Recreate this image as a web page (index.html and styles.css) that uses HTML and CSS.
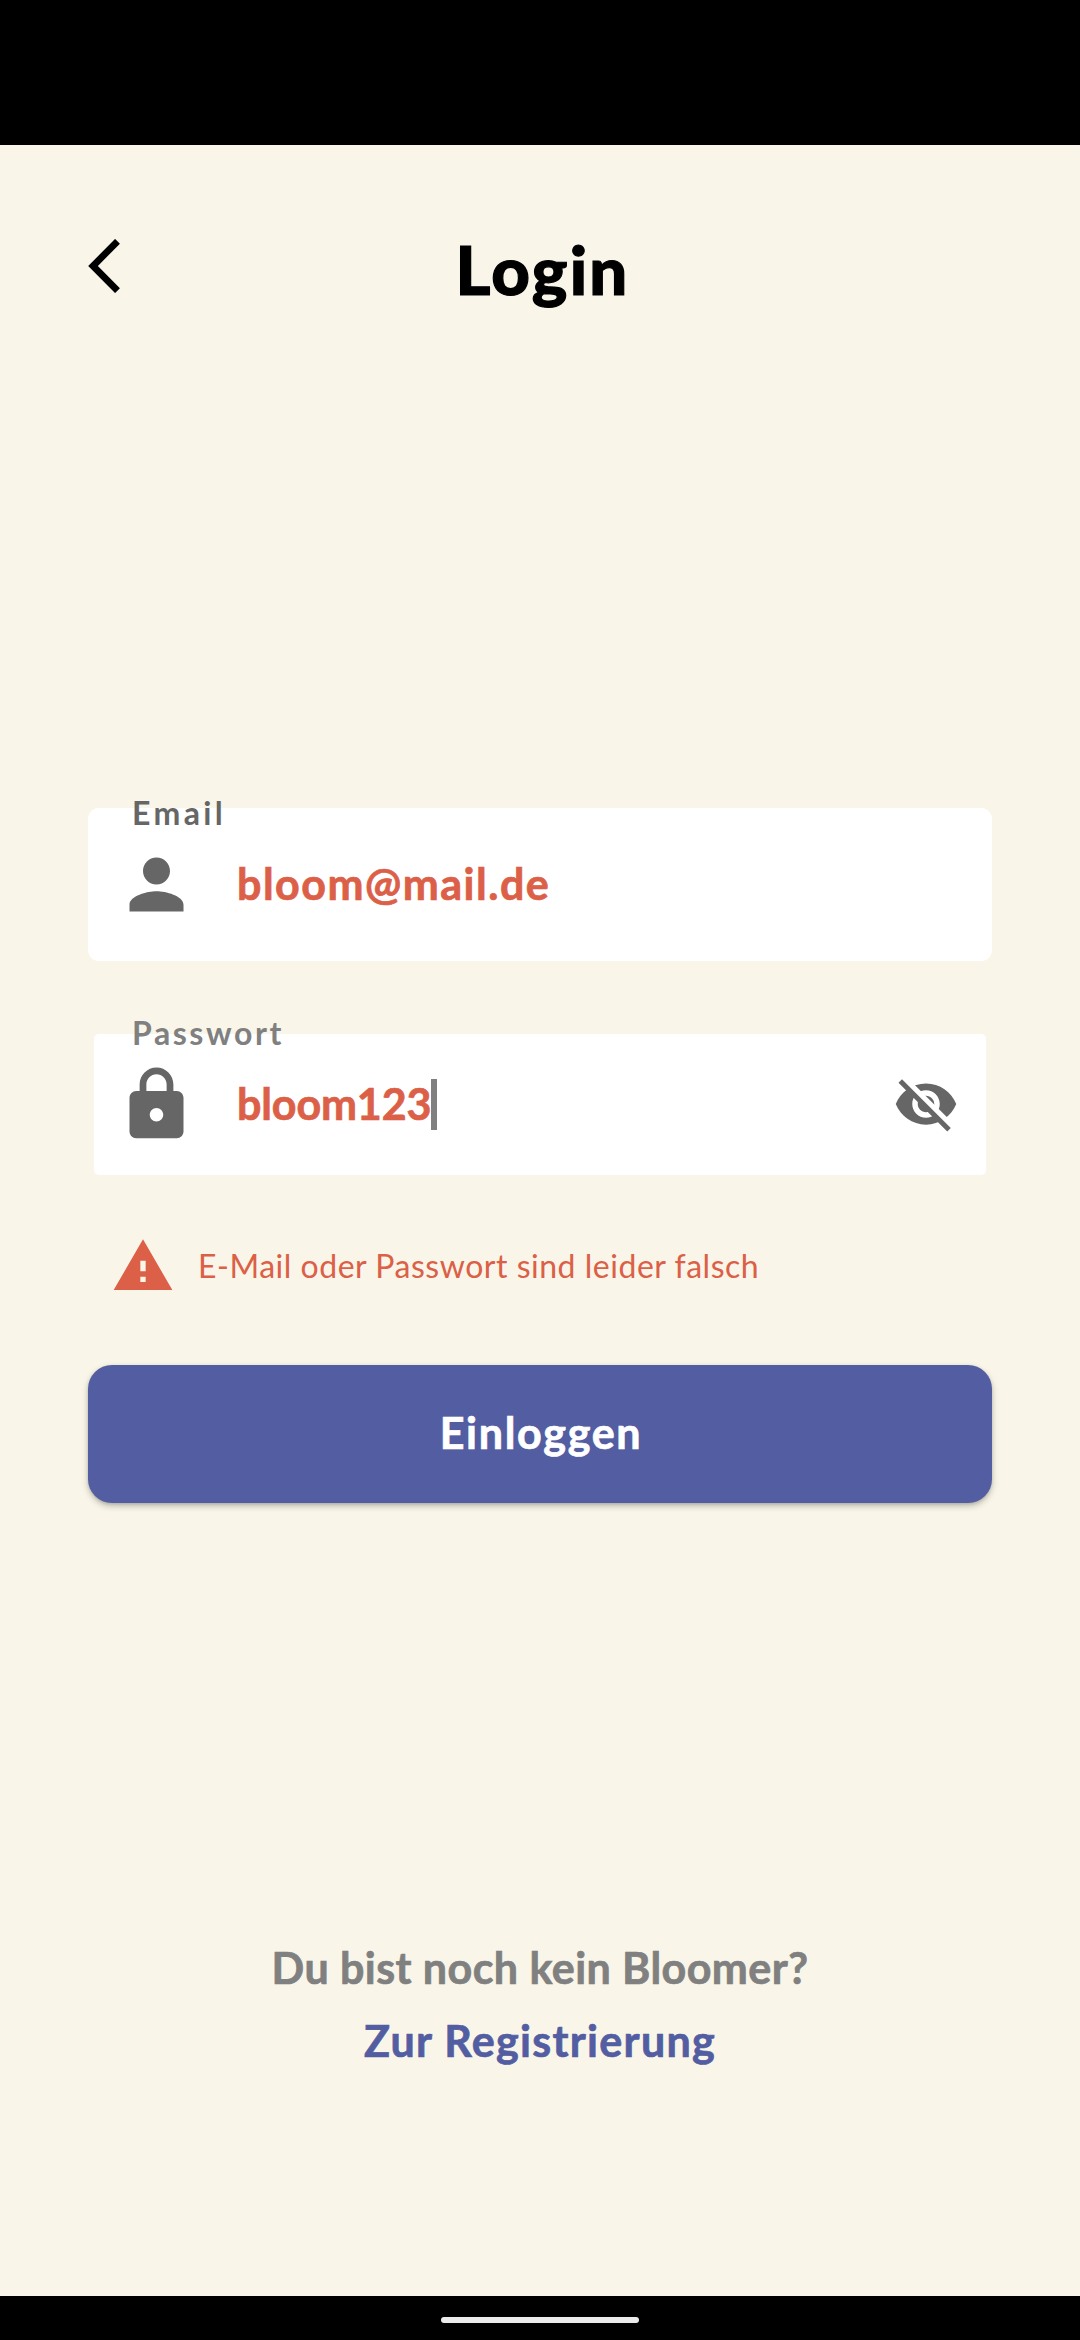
FILE: index.html
```
<!DOCTYPE html>
<html lang="de">
<head>
<meta charset="utf-8">
<title>Login</title>
<link rel="stylesheet" href="styles.css">
</head>
<body>
<div class="status-bar"></div>
<main class="screen">
  <header class="header">
    <svg class="back" viewBox="0 0 32 54"><path d="M29.5 2.3 5 27l24.5 24.7" fill="none" stroke="#000" stroke-width="6.8"/></svg>
    <h1 class="title">Login</h1>
  </header>

  <section class="form">
    <div class="field">
      <label class="label label-email">Email</label>
      <svg class="icon" viewBox="0 0 24 24"><path d="M12 12c2.21 0 4-1.79 4-4s-1.79-4-4-4-4 1.79-4 4 1.79 4 4 4zm0 2c-2.67 0-8 1.34-8 4v2h16v-2c0-2.66-5.33-4-8-4z"/></svg>
      <span class="value value-email">bloom@mail.de</span>
    </div>

    <div class="field field-focused">
      <label class="label label-password">Passwort</label>
      <svg class="icon" viewBox="0 0 24 24"><path d="M18 8h-1V6c0-2.76-2.24-5-5-5S7 3.24 7 6v2H6c-1.1 0-2 .9-2 2v10c0 1.1.9 2 2 2h12c1.1 0 2-.9 2-2V10c0-1.1-.9-2-2-2zm-6 9c-1.1 0-2-.9-2-2s.9-2 2-2 2 .9 2 2-.9 2-2 2zm3-9H9V6c0-1.66 1.34-3 3-3s3 1.34 3 3v2z"/></svg>
      <span class="value value-password">bloom123</span><span class="caret"></span>
      <svg class="eye" viewBox="0 0 24 24">
        <path d="M12 4.5C7 4.5 2.73 7.61 1 12c1.73 4.39 6 7.5 11 7.5s9.27-3.11 11-7.5c-1.73-4.39-6-7.5-11-7.5zM12 17c-2.76 0-5-2.24-5-5s2.24-5 5-5 5 2.24 5 5-2.24 5-5 5zm0-8c-1.66 0-3 1.34-3 3s1.34 3 3 3 3-1.34 3-3-1.34-3-3-3z"/>
        <path d="M3.27 4.27 4.54 1.73 22.27 19.46 19.74 20.74z" fill="#fff"/>
        <path d="M3.27 4.27 19.74 20.74" stroke="#666" stroke-width="1.8" stroke-linecap="square"/>
      </svg>
    </div>

    <div class="error">
      <svg class="warning" viewBox="0 0 24 24"><path d="M1 21h22L12 2 1 21zm12-3h-2v-2h2v2zm0-4h-2v-4h2v4z"/></svg>
      <span class="error-text">E-Mail oder Passwort sind leider falsch</span>
    </div>

    <button class="submit"><span class="submit-text">Einloggen</span></button>
  </section>

  <footer class="footer">
    <p class="question">Du bist noch kein Bloomer?</p>
    <a class="register">Zur Registrierung</a>
  </footer>
</main>
<div class="nav-bar"><div class="nav-handle"></div></div>
</body>
</html>
```
FILE: styles.css
```
* { box-sizing: border-box; }
body {
  margin: 0;
  height: 2340px;
  display: flex;
  flex-direction: column;
  background: #f9f6e9;
  font-family: Lato, sans-serif;
  font-weight: 700;
}
svg { display: block; flex: none; }

.status-bar { height: 145px; background: #000; }
.screen {
  flex: 1;
  display: flex;
  flex-direction: column;
  padding: 83px 88px 0;
}

.header {
  height: 80px;
  display: grid;
  grid-template-columns: 32px 1fr 32px;
}
.back { width: 32px; height: 54px; margin-top: 11px; }
.title {
  margin: 0;
  padding: 1px 0 0 5px;
  font-size: 67px;
  line-height: 80px;
  font-weight: 900;
  letter-spacing: 2.2px;
  text-align: center;
  -webkit-text-stroke: 1.2px currentColor;
}

.form { margin-top: 500px; }
.field {
  position: relative;
  height: 153px;
  display: flex;
  align-items: center;
  padding: 0 29px 1px 28px;
  background: #fff;
  border-radius: 11px;
}
.field-focused {
  margin-top: 67px;
  padding: 0 27px 1px 22px;
  border: 6px solid #f9f6e9;
}
.label {
  position: absolute;
  top: -15px;
  left: 44px;
  font-size: 32px;
  line-height: 40px;
}
.label-email { color: #666; letter-spacing: 3.4px; }
.label-password { top: -21px; left: 38px; color: #808080; letter-spacing: 2.58px; }
.icon { width: 81px; height: 81px; fill: #666; }
.value {
  margin-left: 40px;
  font-size: 43px;
  line-height: 52px;
  color: #db6047;
}
.value, .submit-text, .question, .register { -webkit-text-stroke: .7px currentColor; }
.value-email { letter-spacing: 1.5px; }
.value-password { letter-spacing: -.13px; }
.caret { width: 6px; height: 51px; margin-bottom: -1px; background: #808080; }
.eye { width: 66px; height: 66px; margin-left: auto; fill: #666; }

.error {
  display: flex;
  align-items: center;
  gap: 23px;
  height: 63px;
  margin: 53px 0 68px 23px;
  color: #db6047;
}
.warning { width: 64px; height: 64px; fill: #db6047; }
.error-text { font-size: 32px; font-weight: 400; letter-spacing: .52px; }

.submit {
  width: 100%;
  height: 138px;
  padding: 0 0 3px;
  border: 0;
  border-radius: 24px;
  background: #535da1;
  color: #fff;
  font: 700 43px/52px Lato, sans-serif;
  box-shadow: 0 3px 6px rgba(0, 0, 0, .25), 0 1px 3px rgba(0, 0, 0, .1);
}
.submit-text { margin-left: 2px; letter-spacing: 1.7px; }

.footer { margin-top: 428px; text-align: center; font-size: 43px; line-height: 73px; }
.question { margin: 0; color: #808080; letter-spacing: .44px; }
.register { display: block; color: #535da1; letter-spacing: 1.31px; }

.nav-bar {
  height: 44px;
  display: flex;
  justify-content: center;
  padding-top: 21px;
  background: #000;
}
.nav-handle { width: 198px; height: 6px; border-radius: 3px; background: #ebebeb; }
```
